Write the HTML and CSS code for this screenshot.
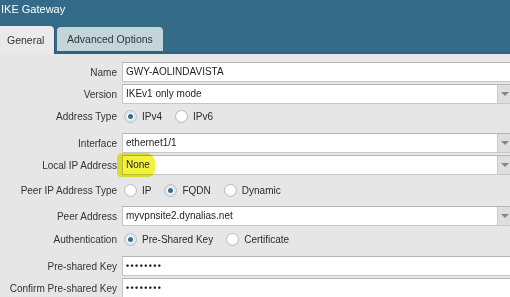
FILE: index.html
```html
<!DOCTYPE html>
<html lang="en">
<head>
  <meta charset="UTF-8">
  <title>IKE Gateway</title>
  <link rel="stylesheet" href="styles.css">
</head>
<body>
  <div class="dialog">
    <div class="titlebar">
      <div class="title">IKE Gateway</div>
      <div class="tabs">
        <div class="tab active">General</div>
        <div class="tab">Advanced Options</div>
      </div>
    </div>

    <div class="form">
      <div class="row">
        <span class="label">Name</span>
        <div class="field"><span class="value">GWY-AOLINDAVISTA</span></div>
      </div>
      <div class="row">
        <span class="label">Version</span>
        <div class="field"><span class="value">IKEv1 only mode</span><span class="arrow"></span></div>
      </div>
      <div class="row row-radio r-addr">
        <span class="label">Address Type</span>
        <div class="options">
          <span class="option"><span class="radio checked"></span>IPv4</span>
          <span class="option"><span class="radio"></span>IPv6</span>
        </div>
      </div>
      <div class="row">
        <span class="label">Interface</span>
        <div class="field"><span class="value">ethernet1/1</span><span class="arrow"></span></div>
      </div>
      <div class="row">
        <span class="label">Local IP Address</span>
        <div class="field">
          <span class="marker"></span>
          <span class="value">None</span><span class="arrow"></span>
        </div>
      </div>
      <div class="row row-radio r-peer">
        <span class="label">Peer IP Address Type</span>
        <div class="options">
          <span class="option"><span class="radio"></span>IP</span>
          <span class="option"><span class="radio checked"></span>FQDN</span>
          <span class="option"><span class="radio"></span>Dynamic</span>
        </div>
      </div>
      <div class="row">
        <span class="label">Peer Address</span>
        <div class="field"><span class="value">myvpnsite2.dynalias.net</span><span class="arrow"></span></div>
      </div>
      <div class="row row-radio r-auth">
        <span class="label">Authentication</span>
        <div class="options">
          <span class="option"><span class="radio checked"></span>Pre-Shared Key</span>
          <span class="option"><span class="radio"></span>Certificate</span>
        </div>
      </div>
      <div class="row">
        <span class="label">Pre-shared Key</span>
        <div class="field"><span class="value dots">&bull;&bull;&bull;&bull;&bull;&bull;&bull;&bull;</span></div>
      </div>
      <div class="row">
        <span class="label">Confirm Pre-shared Key</span>
        <div class="field"><span class="value dots">&bull;&bull;&bull;&bull;&bull;&bull;&bull;&bull;</span></div>
      </div>
    </div>
  </div>
</body>
</html>
```

FILE: styles.css
```css
* {
  margin: 0;
  padding: 0;
  box-sizing: border-box;
}

body {
  font-family: "Liberation Sans", Arial, sans-serif;
  font-size: 10px;
  color: #2a2a2a;
  background: #e6e6e6;
  overflow: hidden;
}

/* title bar + tabs */
.titlebar {
  height: 54px;
  background: linear-gradient(to bottom, #336b88 51px, #2d6482 51px);
}

.title {
  color: #fff;
  font-size: 11px;
  line-height: 16px;
  padding: 1px 0 0 1px;
  height: 17px;
}

.tabs {
  display: flex;
  align-items: flex-start;
  margin-top: 9px;
}

.tab {
  font-size: 10.5px;
  color: #333;
  background: #c3d4db;
  height: 24px;
  line-height: 24px;
  margin-top: 1px;
  margin-left: 3px;
  padding: 0 10px;
  white-space: nowrap;
  border-radius: 4px 4px 0 0;
}

.tab.active {
  background: #eaeaea;
  height: 28px;
  line-height: 28px;
  margin: 0;
  width: 54px;
  padding-left: 7px;
  border-radius: 0 4px 0 0;
  box-shadow: 1px 0 0 #2a5873;
}

/* form */
.form {
  padding-top: 8px;
}

.row {
  display: grid;
  grid-template-columns: 117px 1fr;
  column-gap: 5px;
  align-items: center;
  height: 20px;
  margin-bottom: 2px;
}

.label {
  text-align: right;
  color: #333;
  white-space: nowrap;
}

.field {
  position: relative;
  display: flex;
  height: 20px;
  margin-right: -2px;
  background: #fff;
  border: 1px solid #c6c6c6;
  border-top-color: #b4b4b4;
}

.value {
  flex: 1;
  line-height: 18px;
  padding-left: 3px;
  color: #1e1e1e;
  position: relative;
}

.dots {
  font-weight: bold;
  letter-spacing: 1.4px;
  font-size: 9px;
}

.arrow {
  width: 14px;
  background: #dedede;
  border-left: 1px solid #cacaca;
  display: flex;
  align-items: center;
  justify-content: center;
}

.arrow::after {
  content: "";
  border-left: 4px solid transparent;
  border-right: 4px solid transparent;
  border-top: 4px solid #7b8993;
}

/* yellow highlighter mark over the Local IP field */
.marker {
  position: absolute;
  left: -6px;
  top: -3px;
  width: 38px;
  height: 24px;
  background: #f2f23a;
  border-radius: 5px 9px 7px 4px;
  mix-blend-mode: multiply;
}

/* radio rows */
.row-radio.r-addr {
  height: 25px;
  padding-bottom: 4px;
}

.row-radio.r-peer {
  height: 27px;
}

.row-radio.r-auth {
  height: 26px;
  padding-bottom: 4px;
}

.options {
  display: flex;
  align-items: center;
  padding-left: 2px;
}

.option {
  display: flex;
  align-items: center;
  gap: 5px;
  margin-right: 13px;
  color: #2a2a2a;
}

.radio {
  position: relative;
  width: 13px;
  height: 13px;
  border-radius: 50%;
  border: 1px solid #bcbcbc;
  background: radial-gradient(circle at 50% 40%, #fff 45%, #e9e9e9);
}

.radio.checked {
  box-shadow: inset 0 0 0 2px #d9e8f0;
}

.radio.checked::after {
  content: "";
  position: absolute;
  left: 3px;
  top: 3px;
  width: 5px;
  height: 5px;
  border-radius: 50%;
  background: #3a6d88;
}
```
